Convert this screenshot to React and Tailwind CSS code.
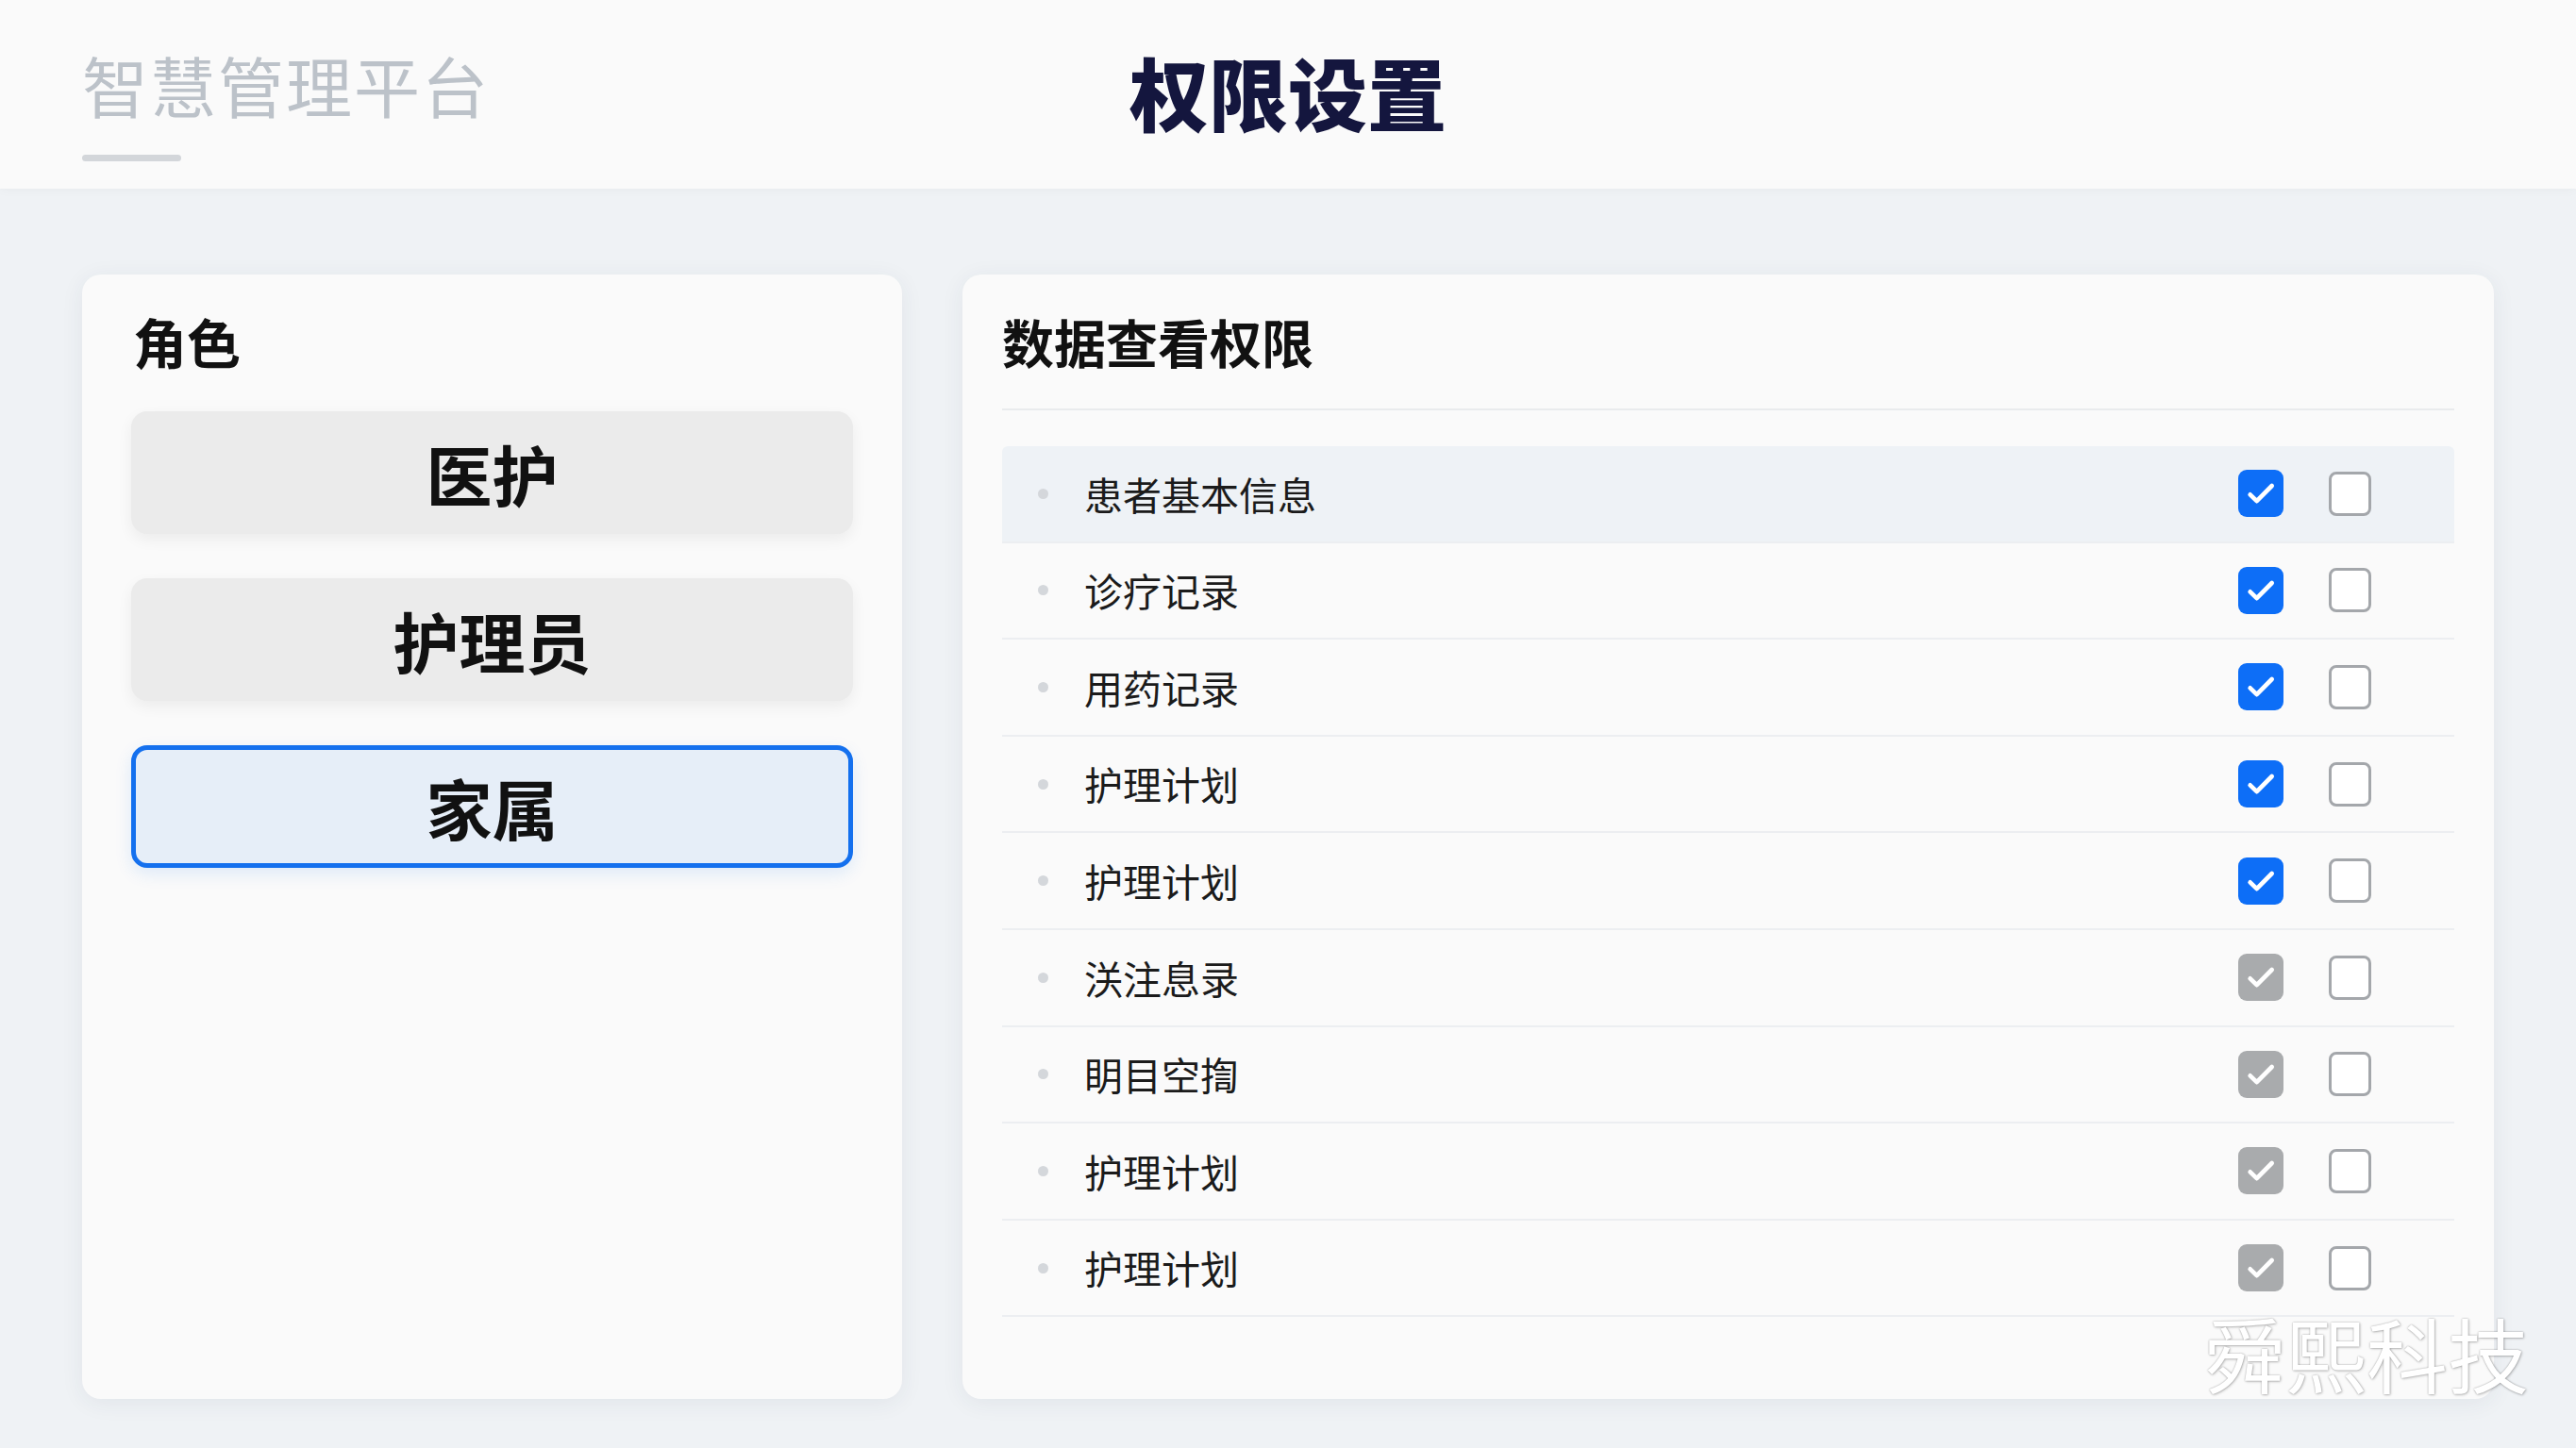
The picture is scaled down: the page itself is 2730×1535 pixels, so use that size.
import React from 'react';

const roles = [
  { name: '医护', active: false },
  { name: '护理员', active: false },
  { name: '家属', active: true },
];

const perms = [
  { label: '患者基本信息', tone: 'blue', hl: true },
  { label: '诊疗记录', tone: 'blue' },
  { label: '用药记录', tone: 'blue' },
  { label: '护理计划', tone: 'blue' },
  { label: '护理计划', tone: 'blue' },
  { label: '浂注息录', tone: 'gray' },
  { label: '眀目空揈', tone: 'gray' },
  { label: '护理计划', tone: 'gray' },
  { label: '护理计划', tone: 'gray' },
];

function Check({ tone }) {
  return (
    <div
      className={
        'w-[48px] h-[50px] rounded-[9px] flex items-center justify-center ' +
        (tone === 'blue' ? 'bg-[#0d6ef7]' : 'bg-[#a9abad]')
      }
    >
      <svg width="40" height="40" viewBox="0 0 24 24" fill="none">
        <path d="M5.2 12.8l4.2 4.1L19 7.2" stroke="white" strokeWidth="2.8" strokeLinecap="round" strokeLinejoin="round" />
      </svg>
    </div>
  );
}

function Empty() {
  return <div className="w-[45px] h-[47px] rounded-[8px] border-[3px] border-[#a4a7ab] bg-white" />;
}

export default function App() {
  return (
    <div
      className="relative w-[2730px] h-[1535px] flex flex-col bg-[#eff2f5] overflow-hidden"
      style={{ fontFamily: '"Noto Sans CJK SC", "Noto Sans", sans-serif' }}
    >
      {/* header */}
      <header className="h-[200px] shrink-0 bg-[#fafafa] grid grid-cols-[1fr_auto_1fr] items-start shadow-[0_2px_10px_rgba(0,0,0,0.03)]">
        <div className="pl-[87px] pt-[40px]">
          <div className="text-[70px] leading-[100px] text-[#bcc2c9] tracking-[2px]">智慧管理平台</div>
          <div className="mt-[24px] w-[105px] h-[7px] rounded-full bg-[#d3d6da]" />
        </div>
        <h1 className="pt-[42px] text-[84px] leading-[110px] font-black text-[#14163e]">权限设置</h1>
        <div />
      </header>

      <main className="flex gap-[64px] px-[87px] pt-[91px] h-[1283px]">
        {/* roles */}
        <section className="w-[869px] h-[1192px] bg-[#fafafa] rounded-[20px] shadow-[0_4px_24px_rgba(40,60,90,0.07)] px-[52px] pt-[34px]">
          <h2 className="text-[57px] leading-[72px] font-bold text-[#111] pl-[2px]">角色</h2>
          <div className="mt-[39px] flex flex-col gap-[47px]">
            {roles.map((r) => (
              <div
                key={r.name}
                className={
                  'h-[130px] rounded-[17px] flex items-center justify-center text-[70px] font-bold text-[#111] ' +
                  (r.active
                    ? 'border-[5px] border-[#1470ee] bg-[#e6eef8] shadow-[0_6px_18px_rgba(20,112,238,0.12)]'
                    : 'bg-[#ebebeb] shadow-[0_6px_16px_rgba(0,0,0,0.06)]')
                }
              >
                {r.name}
              </div>
            ))}
          </div>
        </section>

        {/* permissions */}
        <section className="flex-1 h-[1192px] bg-[#fafafa] rounded-[20px] shadow-[0_4px_24px_rgba(40,60,90,0.07)] px-[42px] pt-[34px]">
          <h2 className="text-[55px] leading-[72px] font-bold text-[#111] pb-[36px] border-b-2 border-[#e9ebed]">数据查看权限</h2>
          <div className="mt-[38px]">
            {perms.map((p, i) => (
              <div
                key={i}
                className={
                  'h-[102.6px] flex items-center border-b-2 border-[#eceef1] ' +
                  (p.hl ? 'bg-[#eef2f6] rounded-t-[6px]' : '')
                }
              >
                <div className="ml-[38px] w-[11px] h-[11px] rounded-full bg-[#d4d7db]" />
                <div className="ml-[38px] text-[41px] text-[#1b1b1b] flex-1">{p.label}</div>
                <Check tone={p.tone} />
                <div className="ml-[48px] mr-[88px]">
                  <Empty />
                </div>
              </div>
            ))}
          </div>
        </section>
      </main>

      {/* watermark */}
      <div className="absolute left-[2336px] top-[1384px] text-[86px] leading-[100px] text-white [text-shadow:0_0_2px_rgba(0,0,0,0.35),1px_1px_3px_rgba(0,0,0,0.2)]">
        舜熙科技
      </div>
    </div>
  );
}
